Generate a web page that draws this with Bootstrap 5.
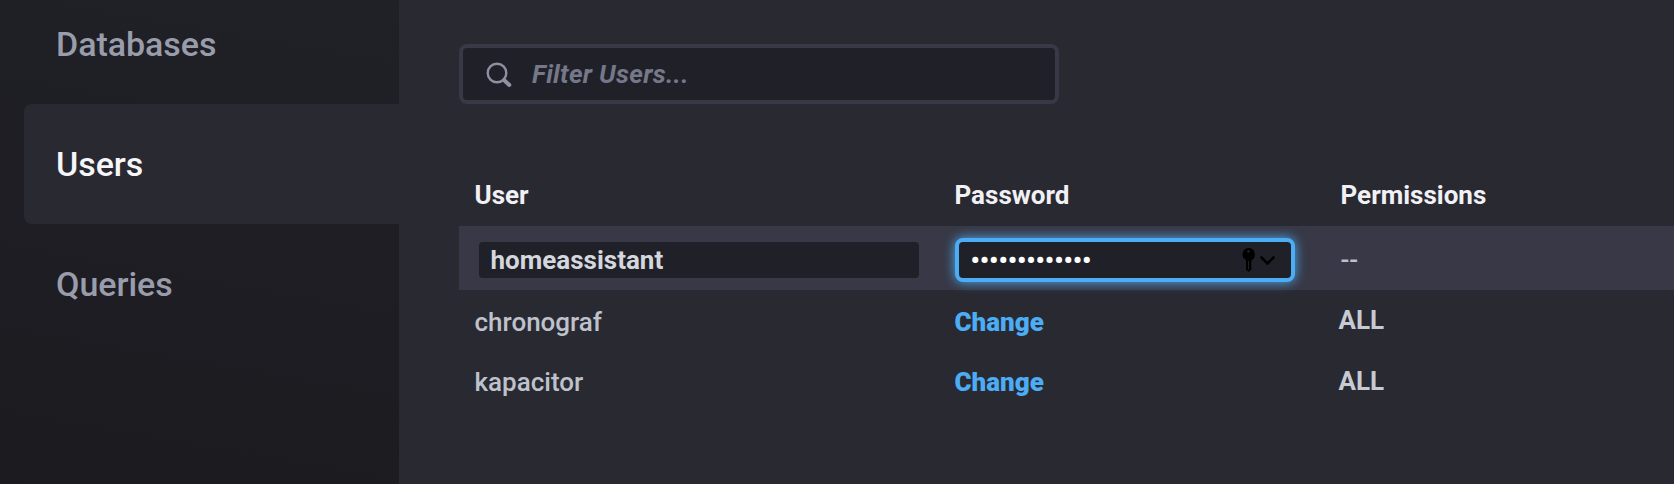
<!DOCTYPE html>
<html lang="en">
<head>
<meta charset="utf-8">
<meta name="viewport" content="width=device-width, initial-scale=1">
<title>Users</title>
<link href="https://cdn.jsdelivr.net/npm/bootstrap@5.3.0/dist/css/bootstrap.min.css" rel="stylesheet">
<style>
  body { background: #292932; color: #bec2cc; font-family: Roboto, sans-serif; font-size: 26px; font-weight: 500; line-height: 32px; height: 484px; }
  .side { width: 399px; padding-left: 24px; background: linear-gradient(190deg, #202027 0%, #1b1b20 100%); }
  .side .nav { margin-top: -16px; }
  .side .nav-link { height: 120px; padding: 0 0 0 32px; font-size: 34px; letter-spacing: -.04px; color: #999dab; border-radius: 8px 0 0 8px; }
  .side .nav-link.active { background: #292932; color: #f6f6f8; }
  .main { padding: 44px 0 0 60px; }
  .filter { width: 600px; height: 60px; border: 4px solid #383846; border-radius: 8px; background: #202028; }
  .form-control, .form-control:focus { font-size: 26px; color: #d4d7dd; background: #202028; box-shadow: none; }
  .filter .form-control { border: 0; padding: 0; font-weight: 700; font-style: italic; letter-spacing: .3px; }
  .filter .form-control::placeholder { color: #757888; opacity: 1; }
  .users { margin: 60px 0 0; table-layout: fixed; --bs-table-bg: transparent; --bs-table-color: #bec2cc; color: #bec2cc; }
  .users > :not(caption) > * > * { padding: 4px 16px 0 15.5px; height: 60px; border: 0; vertical-align: middle; }
  .users > thead > tr > th { height: 62px; padding-top: 0; color: #f1f1f5; font-weight: 700; }
  .users > tbody > tr.editing > td { height: 64px; background: #383846; }
  .users > tbody > tr.editing > td:not(:last-child) { padding-left: 16px; }
  .users .form-control { height: 44px; padding: 0 11.5px; border: 4px solid #383846; border-radius: 8px; font-weight: 700; line-height: 36px; }
  .users .pass-field { width: 340px; }
  .users .pass-field .form-control { border-color: #4cadf4; color: #fff; box-shadow: 0 0 12px #4cadf4; letter-spacing: -.05px; }
  .autofill { right: 18px; top: 9px; }
  .change { color: #4cadf4; font-weight: 900; }
  .perm { display: block; font-weight: 700; margin: -4px 0 0 -2px; color: #c6cad3; }
  tr:last-child .perm { margin-top: -2px; }
</style>
</head>
<body class="d-flex overflow-hidden">
  <aside class="side flex-shrink-0">
    <nav class="nav flex-column">
      <a class="nav-link d-flex align-items-center" href="#">Databases</a>
      <a class="nav-link d-flex align-items-center active" href="#">Users</a>
      <a class="nav-link d-flex align-items-center" href="#">Queries</a>
    </nav>
  </aside>
  <main class="main flex-grow-1">
    <div class="filter d-flex align-items-center">
      <svg class="flex-shrink-0" width="69" height="52" fill="none" stroke="#8e91a1"><circle cx="34" cy="25" r="9.3" stroke-width="2.4"/><path d="M41 32l5.300 5" stroke-width="4" stroke-linecap="round"/></svg>
      <input class="form-control" type="text" placeholder="Filter Users..." aria-label="Filter users">
    </div>
    <table class="table users">
      <colgroup><col style="width:480px"><col style="width:386px"><col></colgroup>
      <thead><tr><th>User</th><th>Password</th><th>Permissions</th></tr></thead>
      <tbody>
        <tr class="editing">
          <td><input class="form-control" type="text" value="homeassistant" aria-label="User name"></td>
          <td>
            <div class="pass-field position-relative">
              <input class="form-control" type="password" value="abcdefghijklm" aria-label="Password">
              <svg class="autofill position-absolute" width="36" height="26"><path fill="#000" fill-rule="evenodd" d="M7.500 1a6.500 6.500 0 0 1 3 12.200v2l-.5 1.300.5 1.300-.5 1.300.5 1.200v2L7.500 25 5 22.500v-9.300A6.500 6.500 0 0 1 7.500 1zM7.500 3a1.400 1.400 0 1 0 .01 0zM7 14h1v8.500H7z"/><path d="M20.500 10.500l6 6 6-6" fill="none" stroke="#000" stroke-width="2.600" stroke-linecap="round" stroke-linejoin="round"/></svg>
            </div>
          </td>
          <td>--</td>
        </tr>
        <tr><td>chronograf</td><td><span class="change">Change</span></td><td><span class="perm">ALL</span></td></tr>
        <tr><td>kapacitor</td><td><span class="change">Change</span></td><td><span class="perm">ALL</span></td></tr>
      </tbody>
    </table>
  </main>
<script src="https://cdn.jsdelivr.net/npm/bootstrap@5.3.0/dist/js/bootstrap.bundle.min.js"></script>
</body>
</html>
